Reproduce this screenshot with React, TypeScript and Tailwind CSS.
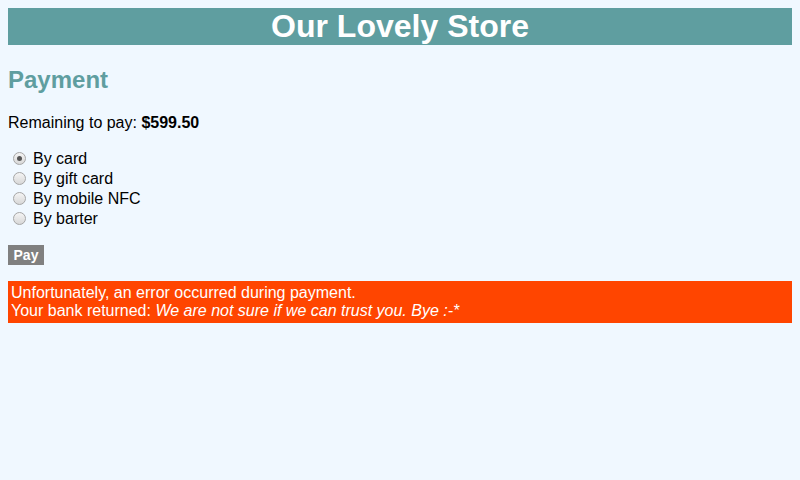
import React from "react";

const options = ["By card", "By gift card", "By mobile NFC", "By barter"];

function Radio({ checked }: { checked: boolean }) {
  return (
    <span className="ml-[5px] mr-[3px] mt-[3px] flex h-[13px] w-[13px] shrink-0 items-center justify-center rounded-full border border-[#a6a6a6] bg-gradient-to-b from-[#f4f4f4] to-[#d8d8d8]">
      {checked && <span className="h-[5px] w-[5px] rounded-full bg-[#555555]" />}
    </span>
  );
}

export default function App() {
  return (
    <div className="min-h-[480px] bg-[#f0f8ff] p-2 font-['Liberation_Sans',Arial,sans-serif] text-base text-black">
      <h1 className="m-0 bg-[#5f9ea0] text-center text-[32px] font-bold leading-[37px] text-white">
        Our Lovely Store
      </h1>
      <h2 className="mt-[21px] text-[24px] font-bold leading-[28px] text-[#5f9ea0]">Payment</h2>
      <p className="mt-[20px] leading-[18px]">
        Remaining to pay: <b>$599.50</b>
      </p>
      <div className="mt-[17px] flex flex-col">
        {options.map((o, i) => (
          <label key={o} className="flex h-[20px] items-start leading-[20px]">
            <Radio checked={i === 0} />
            <span className="ml-[4px] leading-[20px]">{o}</span>
          </label>
        ))}
      </div>
      <button className="mt-[16px] block h-[20px] w-[36px] bg-[#808080] text-[14px] font-bold leading-[20px] text-white">
        Pay
      </button>
      <div className="mt-[16px] bg-[#ff4500] px-[3px] py-[3px] leading-[18px] text-white">
        Unfortunately, an error occurred during payment.
        <br />
        Your bank returned: <i>We are not sure if we can trust you. Bye :-*</i>
      </div>
    </div>
  );
}
